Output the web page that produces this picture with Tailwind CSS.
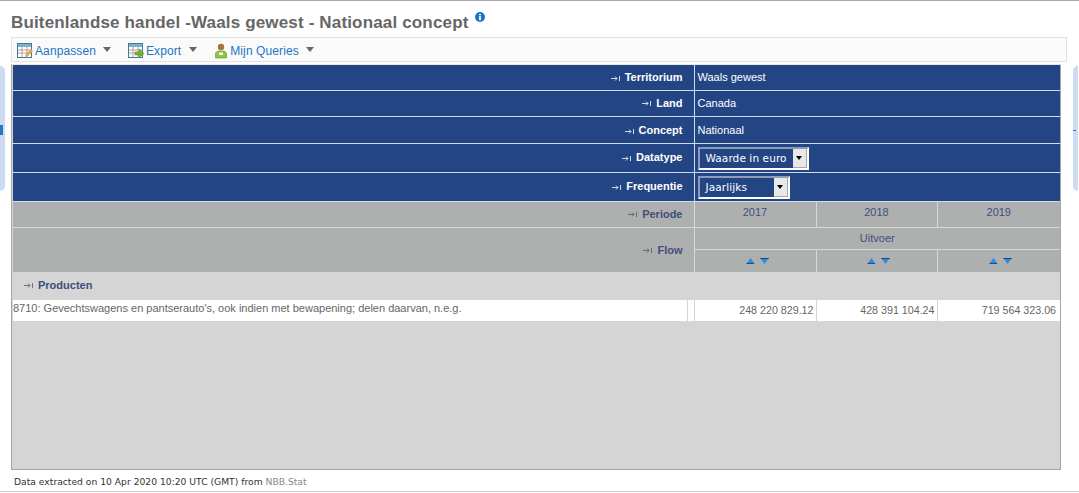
<!DOCTYPE html>
<html lang="en">
  <head>
    <meta charset="UTF-8" />
    <title>Buitenlandse handel</title>
    <script src="https://cdn.jsdelivr.net/npm/@tailwindcss/browser@4"></script>
  </head>
  <body class="bg-white h-[493px] w-[1079px] overflow-hidden font-['Liberation_Sans',Arial,sans-serif] text-[#666]">
    <div class="h-[491px] border-t border-[#aaa] border-b-0 flex flex-col">
      <!-- Title -->
      <div class="h-[36px] pl-[11px] pt-[12px] flex items-start">
        <h1 class="text-[17px] leading-[20px] font-bold text-[#666] tracking-[0.16px]">Buitenlandse handel -Waals gewest - Nationaal concept</h1>
        <svg class="ml-[6px] mt-[-1px]" width="10" height="10" viewBox="0 0 11 11"><circle cx="5.5" cy="5.5" r="5.5" fill="#1a76c4"/><rect x="4.5" y="2" width="2" height="1.6" fill="#fff"/><rect x="4.5" y="4.5" width="2" height="4.5" fill="#fff"/></svg>
      </div>

      <!-- Toolbar -->
      <div class="ml-[11px] w-[1056px] h-[25px] border border-[#e2e2e2] bg-[#fafafa] flex items-center text-[12px] tracking-[0.1px] text-[#1a76c4] pl-[5px] pt-[2px]">
        <svg width="16" height="16" viewBox="0 0 16 16"><rect x="0.5" y="0.5" width="14" height="14" fill="#fff" stroke="#3a7d95"/><rect x="1" y="1" width="13" height="3" fill="#7db3c8"/><path d="M1 7h13M1 10h13M5 4v10M10 4v10" stroke="#c09a9a" stroke-width="1"/><path d="M8 14l1-3 5-5 2 2-5 5z" fill="#e8a64a"/></svg>
        <span class="ml-[2px]">Aanpassen</span>
        <span class="ml-[7px] w-0 h-0 border-x-[4.500px] border-x-transparent border-t-[5px] border-t-[#666] mt-[-3px]"></span>
        <svg class="ml-[17px]" width="16" height="16" viewBox="0 0 16 16"><rect x="0.5" y="0.5" width="14" height="14" fill="#fff" stroke="#3a7d95"/><rect x="1" y="1" width="13" height="3" fill="#7db3c8"/><path d="M1 7h13M1 10h13M5 4v10M10 4v10" stroke="#c09a9a" stroke-width="1"/><path d="M7 9h4V6l5 4.5-5 4.5v-3H7z" fill="#6cb52d" stroke="#4c8a1c" stroke-width="0.5"/></svg>
        <span class="ml-[2px]">Export</span>
        <span class="ml-[8px] w-0 h-0 border-x-[4px] border-x-transparent border-t-[5px] border-t-[#666] mt-[-3px]"></span>
        <svg class="ml-[17px]" width="14" height="16" viewBox="0 0 14 16"><circle cx="7" cy="4" r="3.2" fill="#a8743e"/><path d="M1.5 15v-4c0-2 2-3 3.5-3h4c1.500 0 3.500 1 3.500 3v4z" fill="#8cc63f" stroke="#5c8f24" stroke-width="0.6"/><rect x="5" y="9.500" width="4" height="2.500" fill="#fff"/></svg>
        <span class="ml-[2px]">Mijn Queries</span>
        <span class="ml-[7px] w-0 h-0 border-x-[4px] border-x-transparent border-t-[5px] border-t-[#666] mt-[-3px]"></span>
      </div>

      <!-- Main row: side tabs and table -->
      <div class="flex mt-[2px] items-start">
        <div class="w-[5px] h-[125px] mt-[2px] bg-[#ccdaf3] rounded-r-[5px] flex items-center">
          <span class="w-[3px] h-[10px] bg-[#2a78c0] mt-[3px]"></span>
        </div>
        <div class="ml-[6px] w-[1050px] h-[406px] border border-[#a6a6a6] border-t-[#e8e8e8] bg-[#d5d5d5] pl-px">
          <table class="table-fixed border-collapse w-[1047px] text-[11px]">
            <colgroup>
              <col class="w-[681px]" />
              <col class="w-[122px]" />
              <col class="w-[121px]" />
              <col class="w-[123px]" />
            </colgroup>
            <tbody>
              <tr class="h-[25px] bg-[#234584]">
                <th class="text-right pr-[11px] font-bold text-white border-b border-r border-[#cddcf0]"><svg class="inline mr-[5px]" width="9" height="7" viewBox="0 0 9 7" fill="none" stroke="#fff" stroke-width="0.8"><path d="M0 3.500h6M4 1.500l2 2-2 2M8.500 1v5"/></svg>Territorium</th>
                <td colspan="3" class="pl-[3px] text-white border-b border-[#cddcf0]">Waals gewest</td>
              </tr>
              <tr class="h-[26px] bg-[#234584]">
                <th class="text-right pr-[11px] font-bold text-white border-b border-r border-[#cddcf0]"><svg class="inline mr-[5px]" width="9" height="7" viewBox="0 0 9 7" fill="none" stroke="#fff" stroke-width="0.8"><path d="M0 3.500h6M4 1.500l2 2-2 2M8.500 1v5"/></svg>Land</th>
                <td colspan="3" class="pl-[3px] text-white border-b border-[#cddcf0]">Canada</td>
              </tr>
              <tr class="h-[27px] bg-[#234584]">
                <th class="text-right pr-[11px] pt-[2px] font-bold text-white border-b border-r border-[#cddcf0]"><svg class="inline mr-[5px]" width="9" height="7" viewBox="0 0 9 7" fill="none" stroke="#fff" stroke-width="0.8"><path d="M0 3.500h6M4 1.500l2 2-2 2M8.500 1v5"/></svg>Concept</th>
                <td colspan="3" class="pl-[3px] pt-[2px] text-white border-b border-[#cddcf0]">Nationaal</td>
              </tr>
              <tr class="h-[29px] bg-[#234584]">
                <th class="text-right pr-[11px] font-bold text-white border-b border-r border-[#cddcf0]"><svg class="inline mr-[5px]" width="9" height="7" viewBox="0 0 9 7" fill="none" stroke="#fff" stroke-width="0.8"><path d="M0 3.500h6M4 1.500l2 2-2 2M8.500 1v5"/></svg>Datatype</th>
                <td colspan="3" class="pl-[3px] pt-[2px] text-white border-b border-[#cddcf0]">
                  <div class="w-[111px] h-[23px] border-2 border-t-[#8d9cb8] border-l-[#8d9cb8] border-r-white border-b-white flex items-center font-['DejaVu_Sans',sans-serif] text-[10.5px] tracking-[0.1px]">
                    <span class="flex-1 pl-[6px]">Waarde in euro</span>
                    <span class="w-[14px] h-[19px] bg-[#e8e8e8] border-r border-b border-[#aaa] flex items-center justify-center"><span class="w-0 h-0 border-x-[3px] border-x-transparent border-t-[4px] border-t-black"></span></span>
                  </div>
                </td>
              </tr>
              <tr class="h-[29px] bg-[#234584]">
                <th class="text-right pr-[11px] font-bold text-white border-b border-r border-[#cddcf0]"><svg class="inline mr-[5px]" width="9" height="7" viewBox="0 0 9 7" fill="none" stroke="#fff" stroke-width="0.8"><path d="M0 3.500h6M4 1.500l2 2-2 2M8.500 1v5"/></svg>Frequentie</th>
                <td colspan="3" class="pl-[3px] pt-[2px] text-white border-b border-[#cddcf0]">
                  <div class="w-[92px] h-[23px] border-2 border-t-[#8d9cb8] border-l-[#8d9cb8] border-r-white border-b-white flex items-center font-['DejaVu_Sans',sans-serif] text-[10.5px] tracking-[0.1px]">
                    <span class="flex-1 pl-[6px]">Jaarlijks</span>
                    <span class="w-[14px] h-[19px] bg-[#e8e8e8] border-r border-b border-[#aaa] flex items-center justify-center"><span class="w-0 h-0 border-x-[3px] border-x-transparent border-t-[4px] border-t-black"></span></span>
                  </div>
                </td>
              </tr>
              <tr class="h-[26px] bg-[#aeb0b0] text-[#3f4f7c]">
                <th class="text-right pr-[11px] font-bold border-b border-r border-[#d5d9da]"><svg class="inline mr-[5px]" width="9" height="7" viewBox="0 0 9 7" fill="none" stroke="#555" stroke-width="0.8"><path d="M0 3.500h6M4 1.500l2 2-2 2M8.500 1v5"/></svg>Periode</th>
                <td class="text-center pb-[3px] border-b border-r border-[#d5d9da]">2017</td>
                <td class="text-center pb-[3px] border-b border-r border-[#d5d9da]">2018</td>
                <td class="text-center pb-[3px] border-b border-[#d5d9da]">2019</td>
              </tr>
              <tr class="h-[22px] bg-[#aeb0b0] text-[#3f4f7c]">
                <th rowspan="2" class="text-right pr-[11px] font-bold border-r border-[#d5d9da]"><svg class="inline mr-[5px]" width="9" height="7" viewBox="0 0 9 7" fill="none" stroke="#555" stroke-width="0.8"><path d="M0 3.500h6M4 1.500l2 2-2 2M8.500 1v5"/></svg>Flow</th>
                <td colspan="3" class="text-center border-b border-[#d5d9da]">Uitvoer</td>
              </tr>
              <tr class="h-[23px] bg-[#aeb0b0]">
                <td class="border-r border-[#d5d9da]">
                  <div class="flex justify-center gap-[5px] pl-[4px]">
                    <svg width="9" height="6" viewBox="0 0 10 7"><path d="M5 0l5 7H0z" fill="#2a8ce0"/><path d="M1 6h8v1H0z" fill="#173a70"/></svg>
                    <svg width="9" height="6" viewBox="0 0 10 7"><path d="M0 0h10L5 7z" fill="#2a8ce0"/><path d="M0 0h10v1H0z" fill="#173a70"/></svg>
                  </div>
                </td>
                <td class="border-r border-[#d5d9da]">
                  <div class="flex justify-center gap-[5px] pl-[3px]">
                    <svg width="9" height="6" viewBox="0 0 10 7"><path d="M5 0l5 7H0z" fill="#2a8ce0"/><path d="M1 6h8v1H0z" fill="#173a70"/></svg>
                    <svg width="9" height="6" viewBox="0 0 10 7"><path d="M0 0h10L5 7z" fill="#2a8ce0"/><path d="M0 0h10v1H0z" fill="#173a70"/></svg>
                  </div>
                </td>
                <td>
                  <div class="flex justify-center gap-[5px] pl-[3px]">
                    <svg width="9" height="6" viewBox="0 0 10 7"><path d="M5 0l5 7H0z" fill="#2a8ce0"/><path d="M1 6h8v1H0z" fill="#173a70"/></svg>
                    <svg width="9" height="6" viewBox="0 0 10 7"><path d="M0 0h10L5 7z" fill="#2a8ce0"/><path d="M0 0h10v1H0z" fill="#173a70"/></svg>
                  </div>
                </td>
              </tr>
              <tr class="h-[28px] bg-[#d5d5d5]">
                <th colspan="4" class="text-left pl-[11px] pb-[2px] font-bold text-[#3f4f7c]"><svg class="inline mr-[5px]" width="9" height="7" viewBox="0 0 9 7" fill="none" stroke="#555" stroke-width="0.8"><path d="M0 3.500h6M4 1.500l2 2-2 2M8.500 1v5"/></svg>Producten</th>
              </tr>
              <tr class="h-[21px] bg-white text-[#666]">
                <td class="pb-[4px] border-r border-[#d5d5d5]">
                  <div class="flex items-center h-full">
                    <span class="flex-1">8710: Gevechtswagens en pantserauto's, ook indien met bewapening; delen daarvan, n.e.g.</span>
                    <span class="w-[7px] h-[21px] border-l border-[#d5d5d5] mb-[-4px]"></span>
                  </div>
                </td>
                <td class="text-right text-[10.7px] pr-[2px] border-r border-[#d5d5d5]">248 220 829.12</td>
                <td class="text-right text-[10.7px] pr-[2px] border-r border-[#d5d5d5]">428 391 104.24</td>
                <td class="text-right text-[10.7px] pr-[4px]">719 564 323.06</td>
              </tr>
            </tbody>
          </table>
        </div>
        <div class="ml-[12px] w-[5px] h-[125px] mt-[2px] bg-[#ccdaf3] rounded-l-[5px] flex items-center">
          <span class="w-[3px] h-px bg-[#2a78c0] mt-[3px]"></span>
        </div>
      </div>

      <!-- Footer -->
      <p class="ml-[14px] mt-[6px] text-[9.2px] leading-[12px] font-['DejaVu_Sans',sans-serif] text-[#333]">Data extracted on 10 Apr 2020 10:20 UTC (GMT) from <span class="text-[#888]">NBB.Stat</span></p>
    </div>
    <div class="h-px bg-[#ccc]"></div>
  </body>
</html>
